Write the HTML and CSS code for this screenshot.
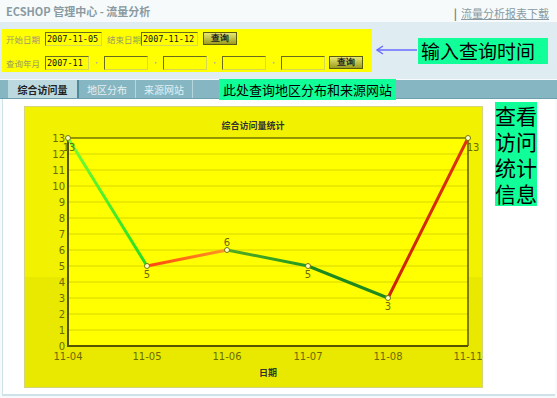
FILE: index.html
```html
<!DOCTYPE html>
<html lang="zh">
	<head>
		<meta charset="UTF-8" />
		<title>ECSHOP 管理中心 - 流量分析</title>
		<link rel="stylesheet" href="styles.css">
	</head>
	<body>
		<div class="header">
			<span class="title">ECSHOP 管理中心 - 流量分析</span>
			<span class="action"><span class="sep">|</span><a href="#">流量分析报表下载</a></span>
		</div>

		<div class="search-strip">
			<form class="search">
				<div class="row">
					<label>开始日期</label>
					<input class="date" value="2007-11-05">
					<label class="gap">结束日期</label>
					<input class="date" value="2007-11-12">
					<button type="button">查询</button>
				</div>
				<div class="row">
					<label>查询年月</label>
					<input class="month" value="2007-11">
					<span class="dot">•</span>
					<input class="month">
					<span class="dot">•</span>
					<input class="month">
					<span class="dot">•</span>
					<input class="month">
					<span class="dot">•</span>
					<input class="month">
					<button type="button">查询</button>
				</div>
			</form>
			<svg class="arrow" width="42" height="10" viewBox="0 0 42 10">
				<line x1="2" y1="5" x2="42" y2="5" stroke="#6b6bff" stroke-width="1.5" />
				<path d="M8 1 L2 5 L8 9" fill="none" stroke="#6b6bff" stroke-width="1.5" />
			</svg>
			<div class="note note-time">输入查询时间</div>
		</div>

		<div class="tabs">
			<span class="tab active">综合访问量</span>
			<span class="tab">地区分布</span>
			<span class="tab">来源网站</span>
			<span class="note note-tabs">此处查询地区分布和来源网站</span>
		</div>

		<div class="panel">
			<div class="chart">
				<svg width="457" height="280" viewBox="0 0 457 280">
					<defs>
						<linearGradient id="g1" gradientUnits="userSpaceOnUse" x1="43" y1="31" x2="122" y2="159">
							<stop offset="0" stop-color="#77ff33" />
							<stop offset="1" stop-color="#22dd22" />
						</linearGradient>
						<linearGradient id="g2" gradientUnits="userSpaceOnUse" x1="122" y1="159" x2="202" y2="143">
							<stop offset="0" stop-color="#ff4411" />
							<stop offset="1" stop-color="#ff9922" />
						</linearGradient>
						<linearGradient id="g3" gradientUnits="userSpaceOnUse" x1="202" y1="143" x2="283" y2="159">
							<stop offset="0" stop-color="#55aa22" />
							<stop offset="1" stop-color="#229922" />
						</linearGradient>
						<linearGradient id="g5" gradientUnits="userSpaceOnUse" x1="363" y1="191" x2="443" y2="31">
							<stop offset="0" stop-color="#cc2200" />
							<stop offset="1" stop-color="#dd3311" />
						</linearGradient>
					</defs>

					<rect x="0" y="0" width="457" height="280" fill="#f2f200" />
					<rect x="0" y="170" width="457" height="110" fill="#e9e900" />
					<rect x="43" y="31" width="400" height="208" fill="#ffff00" />

					<g stroke="#d6d600" stroke-width="1">
						<line x1="43" y1="47" x2="443" y2="47" />
						<line x1="43" y1="63" x2="443" y2="63" />
						<line x1="43" y1="79" x2="443" y2="79" />
						<line x1="43" y1="95" x2="443" y2="95" />
						<line x1="43" y1="111" x2="443" y2="111" />
						<line x1="43" y1="127" x2="443" y2="127" />
						<line x1="43" y1="143" x2="443" y2="143" />
						<line x1="43" y1="159" x2="443" y2="159" />
						<line x1="43" y1="175" x2="443" y2="175" />
						<line x1="43" y1="191" x2="443" y2="191" />
						<line x1="43" y1="207" x2="443" y2="207" />
						<line x1="43" y1="223" x2="443" y2="223" />
					</g>
					<line x1="43" y1="31" x2="443" y2="31" stroke="#333300" stroke-width="1.2" />
					<line x1="443" y1="31" x2="443" y2="239" stroke="#333300" stroke-width="1.2" />
					<line x1="43" y1="30" x2="43" y2="240" stroke="#555500" stroke-width="2" />
					<line x1="42" y1="239" x2="443" y2="239" stroke="#555500" stroke-width="2" />

					<text class="ctitle" x="228" y="22" text-anchor="middle">综合访问量统计</text>

					<g class="ylab" text-anchor="end">
						<text x="40" y="243">0</text>
						<text x="40" y="227">1</text>
						<text x="40" y="211">2</text>
						<text x="40" y="195">3</text>
						<text x="40" y="179">4</text>
						<text x="40" y="163">5</text>
						<text x="40" y="147">6</text>
						<text x="40" y="131">7</text>
						<text x="40" y="115">8</text>
						<text x="40" y="99">9</text>
						<text x="40" y="83">10</text>
						<text x="40" y="67">11</text>
						<text x="40" y="51">12</text>
						<text x="40" y="35">13</text>
					</g>

					<g class="xlab" text-anchor="middle">
						<text x="43" y="253">11-04</text>
						<text x="122" y="253">11-05</text>
						<text x="202" y="253">11-06</text>
						<text x="283" y="253">11-07</text>
						<text x="363" y="253">11-08</text>
						<text x="443" y="253">11-11</text>
					</g>
					<text class="ctitle" x="243" y="269" text-anchor="middle">日期</text>

					<g fill="none" stroke-width="3" stroke-linecap="round">
						<line x1="43" y1="31" x2="122" y2="159" stroke="url(#g1)" />
						<line x1="122" y1="159" x2="202" y2="143" stroke="url(#g2)" />
						<line x1="202" y1="143" x2="283" y2="159" stroke="url(#g3)" />
						<line x1="283" y1="159" x2="363" y2="191" stroke="#1e8a1e" />
						<line x1="363" y1="191" x2="443" y2="31" stroke="url(#g5)" />
					</g>

					<g fill="#ffffcc" stroke="#777700" stroke-width="1">
						<circle cx="43" cy="31" r="2.5" />
						<circle cx="122" cy="159" r="2.5" />
						<circle cx="202" cy="143" r="2.5" />
						<circle cx="283" cy="159" r="2.5" />
						<circle cx="363" cy="191" r="2.5" />
						<circle cx="443" cy="31" r="2.5" />
					</g>

					<g class="dlab" text-anchor="middle">
						<text x="44" y="44">13</text>
						<text x="122" y="171">5</text>
						<text x="202" y="139">6</text>
						<text x="283" y="171">5</text>
						<text x="363" y="203">3</text>
						<text x="448" y="44">13</text>
					</g>
				</svg>
			</div>
			<div class="note note-side">查看访问统计信息</div>
		</div>
	</body>
</html>
```

FILE: styles.css
```css
body {
	margin: 0;
	width: 557px;
	height: 398px;
	overflow: hidden;
	font-family: "Noto Sans CJK SC", "Liberation Sans", sans-serif;
	font-size: 11px;
	background: #f6fafb;
	color: #333;
}
.header {
	display: flex;
	justify-content: space-between;
	align-items: center;
	height: 22px;
	padding: 0 8px 0 6px;
}
.title {
	color: #8a9aa2;
	font-weight: bold;
	font-size: 11px;
}
.action {
	color: #8a9aa2;
	font-size: 11px;
	margin-top: 3px;
}
.sep {
	color: #777;
	font-weight: bold;
	margin-right: 4px;
}
.action a {
	color: #8a9aa2;
}
.search-strip {
	display: flex;
	align-items: center;
	padding: 7px 0 7px 2px;
	background: #dfecf2;
}
.search {
	width: 366px;
	height: 39px;
	padding: 2px 0 2px 4px;
	background: #ffff00;
	display: flex;
	flex-direction: column;
	justify-content: space-between;
	margin: 0;
}
.row {
	display: flex;
	align-items: center;
	height: 15px;
}
.row label {
	color: #9a9a66;
	width: 39px;
	font-size: 8.5px;
	white-space: nowrap;
}
.row label.gap {
	width: 34px;
	margin-left: 5px;
}
.search input {
	box-sizing: border-box;
	height: 14px;
	padding: 0 1px;
	border: 1px solid #6b6b20;
	border-right-color: #d8d850;
	border-bottom-color: #d8d850;
	background: #ffff00;
	font-family: "DejaVu Sans Mono", monospace;
	font-size: 8.5px;
	color: #111;
}
.search input.date {
	width: 57px;
}
.search input.month {
	width: 44px;
}
.dot {
	width: 15px;
	text-align: center;
	color: #aaa;
	font-size: 8px;
}
.search button {
	height: 13px;
	width: 34px;
	margin-left: 5px;
	padding: 0;
	font-size: 9px;
	font-weight: bold;
	color: #222;
	border: 1px solid #5b5b10;
	background: linear-gradient(#e8e870, #9c9c20);
	line-height: 11px;
}
.row:last-child button {
	margin-left: 4px;
}
.arrow {
	margin: 0 1px 1px 3px;
}
.note {
	background: #11ff99;
	color: #000;
	font-family: "Noto Sans CJK SC", sans-serif;
}
.note-time {
	font-size: 19px;
	line-height: 26px;
	padding: 0 3px;
	width: 124px;
}
.tabs {
	display: flex;
	align-items: stretch;
	height: 18px;
	margin-top: 1px;
	padding-left: 8px;
	background: #85b6c2;
	border-bottom: 1px solid #6da0ad;
}
.tab {
	display: flex;
	align-items: center;
	justify-content: center;
	width: 56px;
	color: #e4f0f3;
	font-size: 10px;
	border-right: 1px solid #b8d6dd;
}
.tab.active {
	width: 69px;
	background: #bcd9e0;
	color: #222;
	font-weight: bold;
	border-right: 2px solid #4f8a99;
}
.note-tabs {
	margin-left: 26px;
	font-size: 13px;
	line-height: 21px;
	height: 21px;
	padding: 0 4px;
	margin-top: -1px;
}
.panel {
	display: flex;
	align-items: flex-start;
	height: 288px;
	margin: 0 2px;
	padding: 7px 0 0 21px;
	background: #fff;
	border-left: 1px solid #cfe2ea;
	border-bottom: 2px solid #cfe2ea;
}
.chart {
	width: 457px;
	height: 280px;
	border: 1px solid #d4d480;
}
.chart svg {
	display: block;
}
.ctitle {
	font-size: 9px;
	font-weight: bold;
	fill: #333;
}
.ylab text,
.xlab text,
.dlab text {
	font-family: "DejaVu Sans", sans-serif;
	font-size: 10px;
	fill: #6b6b00;
}
.note-side {
	margin-left: 12px;
	margin-top: -4px;
	width: 42px;
	font-size: 21px;
	line-height: 26px;
	text-align: center;
}
```
